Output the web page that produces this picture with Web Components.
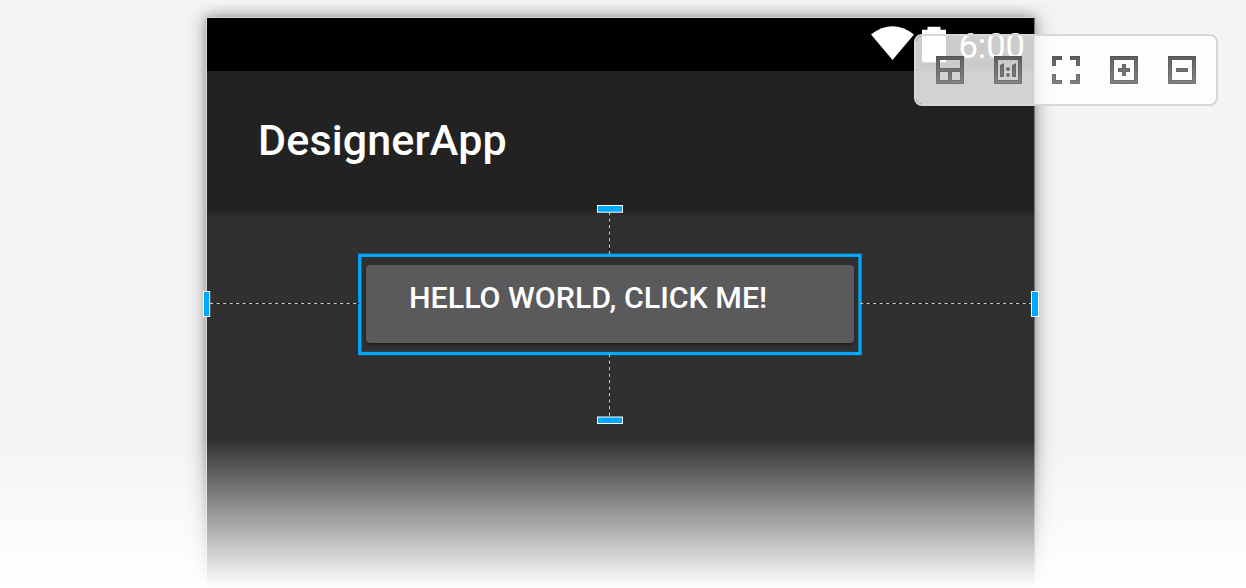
<!DOCTYPE html>
<html lang="en">
<head>
<meta charset="utf-8">
<title>DesignerApp</title>
<style>
html,body{margin:0;height:100%;overflow:hidden;background:#f4f4f4}
body{font-family:Roboto,"Liberation Sans",sans-serif}
</style>
</head>
<body>
<design-surface>
  <device-preview>
    <status-bar slot="status">6:00</status-bar>
    <app-bar slot="bar">DesignerApp</app-bar>
    <android-button slot="content">HELLO WORLD, CLICK ME!</android-button>
  </device-preview>
  <selection-overlay slot="overlay"></selection-overlay>
  <zoom-toolbar slot="tools">
    <tool-icon name="layout"></tool-icon>
    <tool-icon name="actual"></tool-icon>
    <tool-icon name="fit"></tool-icon>
    <tool-icon name="plus"></tool-icon>
    <tool-icon name="minus"></tool-icon>
  </zoom-toolbar>
</design-surface>
<script>
function define(name, html) {
  customElements.define(name, class extends HTMLElement {
    constructor() {
      super();
      const t = document.createElement('template');
      t.innerHTML = html;
      this.attachShadow({mode: 'open'}).append(t.content.cloneNode(true));
    }
  });
}

define('design-surface', `
<style>
:host{display:flow-root;position:relative;width:1246px;height:588px;overflow:hidden;background:#f4f4f4}
.stage{box-sizing:border-box;height:588px;margin-top:4px;padding:13px 211px 0 206px;overflow:hidden}
.fade{position:absolute;left:0;right:0;top:439px;bottom:0;background:linear-gradient(rgba(255,255,255,0),#fff 148px)}
.overlay{position:absolute;inset:0}
.tools{position:absolute;left:914px;top:34px}
</style>
<div class="stage"><slot></slot></div>
<div class="fade"></div>
<div class="overlay"><slot name="overlay"></slot></div>
<div class="tools"><slot name="tools"></slot></div>`);

define('device-preview', `
<style>
:host{display:flex;flex-direction:column;box-sizing:border-box;height:640px;border:1px solid #d8d8d8;border-right-color:#777;background:#303030;box-shadow:0 0 9px rgba(0,0,0,.22),0 0 20px rgba(0,0,0,.32)}
.edge{height:8px;background:linear-gradient(#222,#282828 50%,#303030);margin-bottom:-7px}
.content{display:flex;justify-content:center;padding:55px 21px 0 0}
</style>
<slot name="status"></slot><slot name="bar"></slot><div class="edge"></div>
<div class="content"><slot name="content"></slot></div>`);

define('status-bar', `
<style>
:host{display:flex;align-items:flex-start;justify-content:flex-end;height:53px;box-sizing:border-box;padding-right:9px;background:#000;color:#fff;font-size:34.5px;line-height:57px;flex:none}
.wifi{margin:8px 8px 0 0}.battery{margin:8px 12px 0 0}
</style>
<svg class="wifi" width="43" height="34" viewBox="0 0 43 34"><path fill="#fff" d="M0 8.5Q21.5-7.8 43 8.5L21.5 34Z"/></svg>
<svg class="battery" width="24" height="37" viewBox="0 0 24 37"><path fill="#fff" d="M5.5 .7h13v3H24V36.300H0V3.700h5.500z"/></svg>
<span><slot></slot></span>`);

define('app-bar', `
<style>
:host{display:flex;align-items:center;box-sizing:border-box;height:138px;padding-left:51px;background:#222;color:#fff;font-size:43px;letter-spacing:.14px;font-weight:500;line-height:50px;flex:none}
</style><span><slot></slot></span>`);

define('android-button', `
<style>
:host{display:block;box-sizing:border-box;width:488px;height:78px;padding:15px 0 0 43px;border-radius:4px;background:#5a5a5c;box-shadow:0 2px 3px rgba(0,0,0,.4);color:#fff;font-size:30.4px;font-weight:500;line-height:36px;white-space:nowrap}
</style><span><slot></slot></span>`);

/* Selected widget outline, its four anchors and the guides between them. */
define('selection-overlay', `
<style>:host{display:block}svg{display:block}</style>
<svg width="1246" height="588" viewBox="0 0 1246 588" fill="none">
  <rect x="359.8" y="255.3" width="500.2" height="98.2" stroke="#00a8ff" stroke-width="3.3"/>
  <g stroke="#151515" stroke-width="1">
    <path d="M210 303.5H360M860 303.5H1032M609.5 212V254M609.5 354V417"/>
    <path stroke="#c8c8c8" stroke-dasharray="3.3 3.2" d="M210 303.5H360M860 303.5H1032M609.5 212V254M609.5 354V417"/>
  </g>
  <g fill="#00a8ff" stroke="#fff" stroke-width="1">
    <rect x="597.5" y="205.5" width="25" height="6.7"/>
    <rect x="597.5" y="417" width="25" height="6.5"/>
    <rect x="203.5" y="291.5" width="6.2" height="25"/>
    <rect x="1031.5" y="291.5" width="7" height="25"/>
  </g>
</svg>`);

define('zoom-toolbar', `
<style>
:host{display:flex;align-items:center;gap:30px;box-sizing:border-box;width:304px;height:72px;padding:0 20px;border:2px solid #d6d6d6;border-radius:8px;background:rgba(255,255,255,.8);background-clip:padding-box}
</style><slot></slot>`);

const shapes = {
  layout: 'M0 0h28v28H0zM4 4v8h20V4zM4 16v8h8v-8zM16 16v8h8v-8z',
  actual: 'M0 0h28v28H0zM4 4v20h20V4zM6 9l4-2v14H6zM18 9l4-2v14h-4zM12 13a2 2 0 0 1 4 0a2 2 0 0 1-4 0zM12 19a2 2 0 0 1 4 0a2 2 0 0 1-4 0z',
  fit: 'M0 0h10v4H4v6H0zM18 0h10v10h-4V4h-6zM0 18h4v6h6v4H0zM24 18h4v10H18v-4h6z',
  plus: 'M0 0h28v28H0zM4 4v20h20V4zM12 8h4v4h4v4h-4v4h-4v-4H8v-4h4z',
  minus: 'M0 0h28v28H0zM4 4v20h20V4zM8 12h12v4H8z'
};
customElements.define('tool-icon', class extends HTMLElement {
  constructor() {
    super();
    const d = shapes[this.getAttribute('name')];
    this.attachShadow({mode: 'open'}).innerHTML = `
<style>:host{display:block;width:28px;height:28px}svg{display:block}</style>
<svg width="28" height="28" viewBox="0 0 28 28">
<defs><linearGradient id="g" gradientUnits="userSpaceOnUse" x1="0" y1="0" x2="0" y2="28"><stop stop-color="#585858"/><stop offset=".2" stop-color="#6a6a6a"/><stop offset="1" stop-color="#848484"/></linearGradient>
<clipPath id="c"><path clip-rule="evenodd" d="${d}"/></clipPath></defs>
<path clip-path="url(#c)" fill="url(#g)" fill-rule="evenodd" stroke="#484848" stroke-opacity=".28" stroke-width="2" d="${d}"/>
</svg>`;
  }
});
</script>
</body>
</html>
